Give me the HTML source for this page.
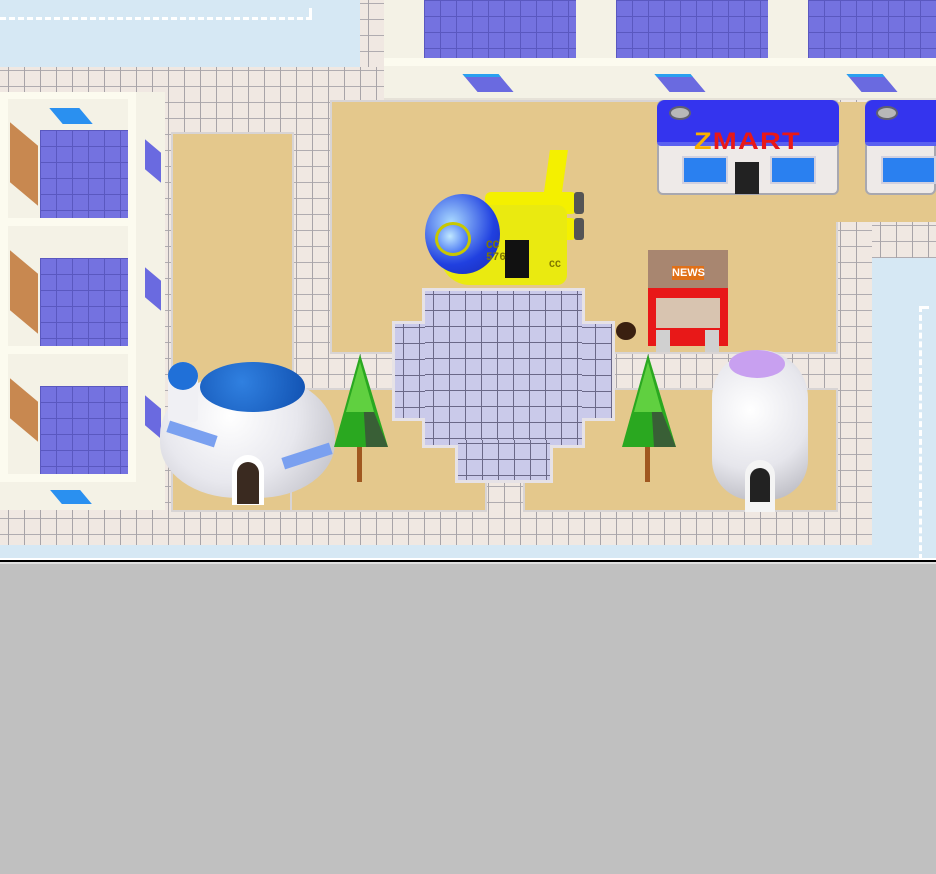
<!DOCTYPE html>
<html><head><meta charset="utf-8"><style>
*{margin:0;padding:0;box-sizing:border-box}
body{width:936px;height:874px;background:#c0c0c0;position:relative;overflow:hidden;font-family:"Liberation Sans",sans-serif}
div{position:absolute}
.w{background:#d6e8f4}
.pv{background-color:#f0e8e2;background-image:linear-gradient(90deg,#a8a4a8 1px,transparent 1px),linear-gradient(#b0acb0 1px,transparent 1px);background-size:16px 16px;background-position:8px 3px}
.sd{background:#e4c88c;box-shadow:0 0 0 2px #d8d4d4}
.pl{background-color:#cacaea;background-image:linear-gradient(90deg,#6a6888 1px,transparent 1px),linear-gradient(#6a6888 1px,transparent 1px);background-size:16px 16px;background-position:8px 3px;box-shadow:0 0 0 3px #e6e2e6}
.cr{background:#f4f2e6}
.pu{background-color:#7472e0;background-image:linear-gradient(90deg,#5a58c0 1px,transparent 1px),linear-gradient(#5a58c0 1px,transparent 1px);background-size:16px 16px}
</style></head><body>
<div class="w" style="left:0;top:0;width:936px;height:560px"></div>
<div style="left:0;top:17px;width:312px;border-top:3px dashed #fff"></div>
<div style="left:309px;top:8px;width:3px;height:12px;background:#fff"></div>
<div style="left:919px;top:306px;height:254px;border-left:3px dashed #fff"></div>
<div style="left:919px;top:306px;width:10px;height:3px;background:#fff"></div>
<!-- pavements -->
<div class="pv" style="left:0;top:67px;width:872px;height:478px"></div>
<div class="pv" style="left:360px;top:0;width:30px;height:67px"></div>
<div class="pv" style="left:872px;top:222px;width:64px;height:36px"></div>
<!-- top building -->
<div class="cr" style="left:384px;top:0;width:552px;height:100px;border-bottom:2px solid #e6e2d8"></div>
<div style="left:384px;top:58px;width:552px;height:8px;background:#fcfbef"></div>
<div class="pu" style="left:424px;top:0;width:152px;height:58px"></div>
<div class="pu" style="left:616px;top:0;width:152px;height:58px"></div>
<div class="pu" style="left:808px;top:0;width:128px;height:58px"></div>
<div style="left:470px;top:74px;width:36px;height:18px;background:#6a6ae0;transform:skewX(40deg);border-top:3px solid #2aa0f0"></div>
<div style="left:662px;top:74px;width:36px;height:18px;background:#6a6ae0;transform:skewX(40deg);border-top:3px solid #2aa0f0"></div>
<div style="left:854px;top:74px;width:36px;height:18px;background:#6a6ae0;transform:skewX(40deg);border-top:3px solid #2aa0f0"></div>
<!-- left building -->
<div class="cr" style="left:0;top:92px;width:165px;height:418px"></div>
<div style="left:0;top:92px;width:136px;height:390px;border:8px solid #fcfbef;border-top-width:7px"></div>
<div style="left:0;top:218px;width:136px;height:8px;background:#fcfbef"></div>
<div style="left:0;top:346px;width:136px;height:8px;background:#fcfbef"></div>
<div class="pu" style="left:40px;top:130px;width:88px;height:88px"></div>
<div class="pu" style="left:40px;top:258px;width:88px;height:88px"></div>
<div class="pu" style="left:40px;top:386px;width:88px;height:88px"></div>
<div style="left:56px;top:108px;width:30px;height:16px;background:#2a90f0;transform:skewX(40deg)"></div>
<div style="left:56px;top:490px;width:30px;height:14px;background:#2a90f0;transform:skewX(40deg)"></div>
<div style="left:10px;top:134px;width:28px;height:60px;background:#c88850;transform:skewY(40deg)"></div>
<div style="left:10px;top:262px;width:28px;height:60px;background:#c88850;transform:skewY(40deg)"></div>
<div style="left:10px;top:390px;width:28px;height:40px;background:#c88850;transform:skewY(40deg)"></div>
<div style="left:145px;top:146px;width:16px;height:30px;background:#6a6ae0;transform:skewY(40deg)"></div>
<div style="left:145px;top:274px;width:16px;height:30px;background:#6a6ae0;transform:skewY(40deg)"></div>
<div style="left:145px;top:402px;width:16px;height:30px;background:#6a6ae0;transform:skewY(40deg)"></div>
<!-- sand -->
<div class="sd" style="left:173px;top:134px;width:119px;height:376px"></div>
<div class="sd" style="left:332px;top:102px;width:504px;height:250px"></div>
<div class="sd" style="left:292px;top:390px;width:193px;height:120px"></div>
<div class="sd" style="left:525px;top:390px;width:311px;height:120px"></div>
<div class="sd" style="left:395px;top:102px;width:541px;height:120px;box-shadow:none"></div>
<!-- plaza -->
<div class="pl" style="left:395px;top:324px;width:217px;height:94px"></div>
<div class="pl" style="left:425px;top:291px;width:157px;height:154px"></div>
<div class="pl" style="left:458px;top:440px;width:92px;height:40px"></div>
<div class="pl" style="left:395px;top:324px;width:217px;height:94px;box-shadow:none"></div>
<div class="pl" style="left:425px;top:291px;width:157px;height:154px;box-shadow:none"></div>
<div class="pl" style="left:458px;top:440px;width:92px;height:40px;box-shadow:none"></div>
<!-- zmart -->
<div style="left:657px;top:100px;width:182px;height:95px;background:#eeeae8;border:2px solid #a8a8b0;border-radius:6px"></div>
<div style="left:657px;top:100px;width:182px;height:46px;background:#3434ee;border-radius:8px 8px 4px 4px;border-bottom:4px solid #5a60f0"></div>
<div style="left:669px;top:106px;width:22px;height:14px;background:#b8b8b8;border-radius:50%;border:2px solid #606070"></div>
<div style="left:694px;top:128px;font:bold 24px 'Liberation Sans',sans-serif;color:#e81818;letter-spacing:1px;transform:scaleX(1.2);transform-origin:left"><span style="color:#f8b000">Z</span>MART</div>
<div style="left:682px;top:156px;width:46px;height:28px;background:#2a80f0;border:2px solid #d0d0e0"></div>
<div style="left:770px;top:156px;width:46px;height:28px;background:#2a80f0;border:2px solid #d0d0e0"></div>
<div style="left:735px;top:162px;width:24px;height:32px;background:#222"></div>
<div style="left:865px;top:100px;width:71px;height:95px;background:#eeeae8;border:2px solid #a8a8b0;border-radius:6px"></div>
<div style="left:865px;top:100px;width:71px;height:46px;background:#3434ee;border-radius:8px 0 0 4px;border-bottom:4px solid #5a60f0"></div>
<div style="left:876px;top:106px;width:22px;height:14px;background:#b8b8b8;border-radius:50%;border:2px solid #606070"></div>
<div style="left:881px;top:156px;width:55px;height:28px;background:#2a80f0;border:2px solid #d0d0e0"></div>
<!-- airship -->
<div style="left:545px;top:150px;width:18px;height:70px;background:#f4f000;transform:skewX(-8deg)"></div>
<div style="left:485px;top:192px;width:92px;height:22px;background:#f4f000;border-radius:6px"></div>
<div style="left:485px;top:218px;width:92px;height:22px;background:#f4f000;border-radius:6px"></div>
<div style="left:574px;top:192px;width:10px;height:22px;background:#555;border-radius:3px"></div>
<div style="left:574px;top:218px;width:10px;height:22px;background:#555;border-radius:3px"></div>
<div style="left:440px;top:205px;width:127px;height:80px;background:#eaea10;border-radius:30px 10px 10px 30px"></div>
<div style="left:425px;top:194px;width:75px;height:80px;border-radius:50%;background:radial-gradient(circle at 35% 35%,#a8d8ff,#2040e0 60%,#1828b0)"></div>
<div style="left:435px;top:222px;width:36px;height:34px;border-radius:50%;background:radial-gradient(circle at 40% 40%,#c0e8ff,#2050f0);border:3px solid #c8c800"></div>
<div style="left:505px;top:240px;width:24px;height:38px;background:#111"></div>
<div style="left:486px;top:240px;font:bold 11px 'Liberation Mono',monospace;color:#807800;line-height:12px">CC<br>576</div>
<div style="left:549px;top:260px;font:bold 10px 'Liberation Mono',monospace;color:#807800">CC</div>
<!-- news -->
<div style="left:648px;top:250px;width:80px;height:38px;background:#a88670"></div>
<div style="left:672px;top:266px;width:32px;height:14px;background:#e07018;color:#fff;font:bold 11px 'Liberation Sans',sans-serif;text-align:center;line-height:14px">NEWS</div>
<div style="left:648px;top:288px;width:80px;height:58px;background:#e81818"></div>
<div style="left:656px;top:298px;width:64px;height:30px;background:#d8c4b0"></div>
<div style="left:656px;top:330px;width:14px;height:22px;background:#d0d0d0"></div>
<div style="left:705px;top:330px;width:14px;height:22px;background:#d0d0d0"></div>
<div style="left:616px;top:322px;width:20px;height:18px;background:#3a2010;border-radius:50%"></div>
<!-- dome -->
<div style="left:160px;top:372px;width:175px;height:126px;border-radius:50% 50% 44% 44%;background:radial-gradient(circle at 40% 35%,#ffffff,#e8e8ee 50%,#b8b8c0)"></div>
<div style="left:200px;top:362px;width:105px;height:50px;border-radius:50%;background:radial-gradient(circle at 40% 40%,#3080e0,#1050b0)"></div>
<div style="left:168px;top:362px;width:30px;height:60px;background:#f0f0f4;border-radius:15px 15px 4px 4px"></div>
<div style="left:168px;top:362px;width:30px;height:28px;background:#2070d8;border-radius:50%"></div>
<div style="left:232px;top:455px;width:32px;height:50px;background:#fff;border-radius:16px 16px 0 0"></div>
<div style="left:237px;top:462px;width:22px;height:42px;background:#3a2a20;border-radius:11px 11px 0 0"></div>
<div style="left:167px;top:428px;width:50px;height:12px;background:#7aa0f0;transform:rotate(18deg)"></div>
<div style="left:282px;top:450px;width:50px;height:12px;background:#7aa0f0;transform:rotate(-18deg)"></div>
<!-- capsule -->
<div style="left:712px;top:350px;width:96px;height:150px;border-radius:48px 48px 40px 40px;background:radial-gradient(circle at 40% 40%,#ffffff,#e6e6ec 55%,#b0b0b8)"></div>
<div style="left:729px;top:350px;width:56px;height:28px;border-radius:50%;background:#c8a0f0"></div>
<div style="left:745px;top:460px;width:30px;height:52px;background:#f4f4f4;border-radius:15px 15px 0 0"></div>
<div style="left:750px;top:468px;width:20px;height:34px;background:#222;border-radius:10px 10px 0 0"></div>
<!-- trees -->
<svg style="position:absolute;left:326px;top:352px" width="70" height="132"><rect x="31" y="90" width="5" height="40" fill="#a05820"/><polygon points="34,2 8,95 62,95" fill="#2aa820"/><polygon points="36,30 62,95 40,95" fill="#404040" opacity=".7"/><polygon points="34,10 20,60 48,60" fill="#60d040"/></svg>
<svg style="position:absolute;left:614px;top:352px" width="70" height="132"><rect x="31" y="90" width="5" height="40" fill="#a05820"/><polygon points="34,2 8,95 62,95" fill="#2aa820"/><polygon points="36,30 62,95 40,95" fill="#404040" opacity=".7"/><polygon points="34,10 20,60 48,60" fill="#60d040"/></svg>
<!-- bottom line -->
<div style="left:0;top:558px;width:936px;height:2px;background:#fff"></div>
<div style="left:0;top:560px;width:936px;height:2px;background:#000"></div>
<div style="left:0;top:562px;width:936px;height:2px;background:#e0e0e0"></div>
</body></html>
